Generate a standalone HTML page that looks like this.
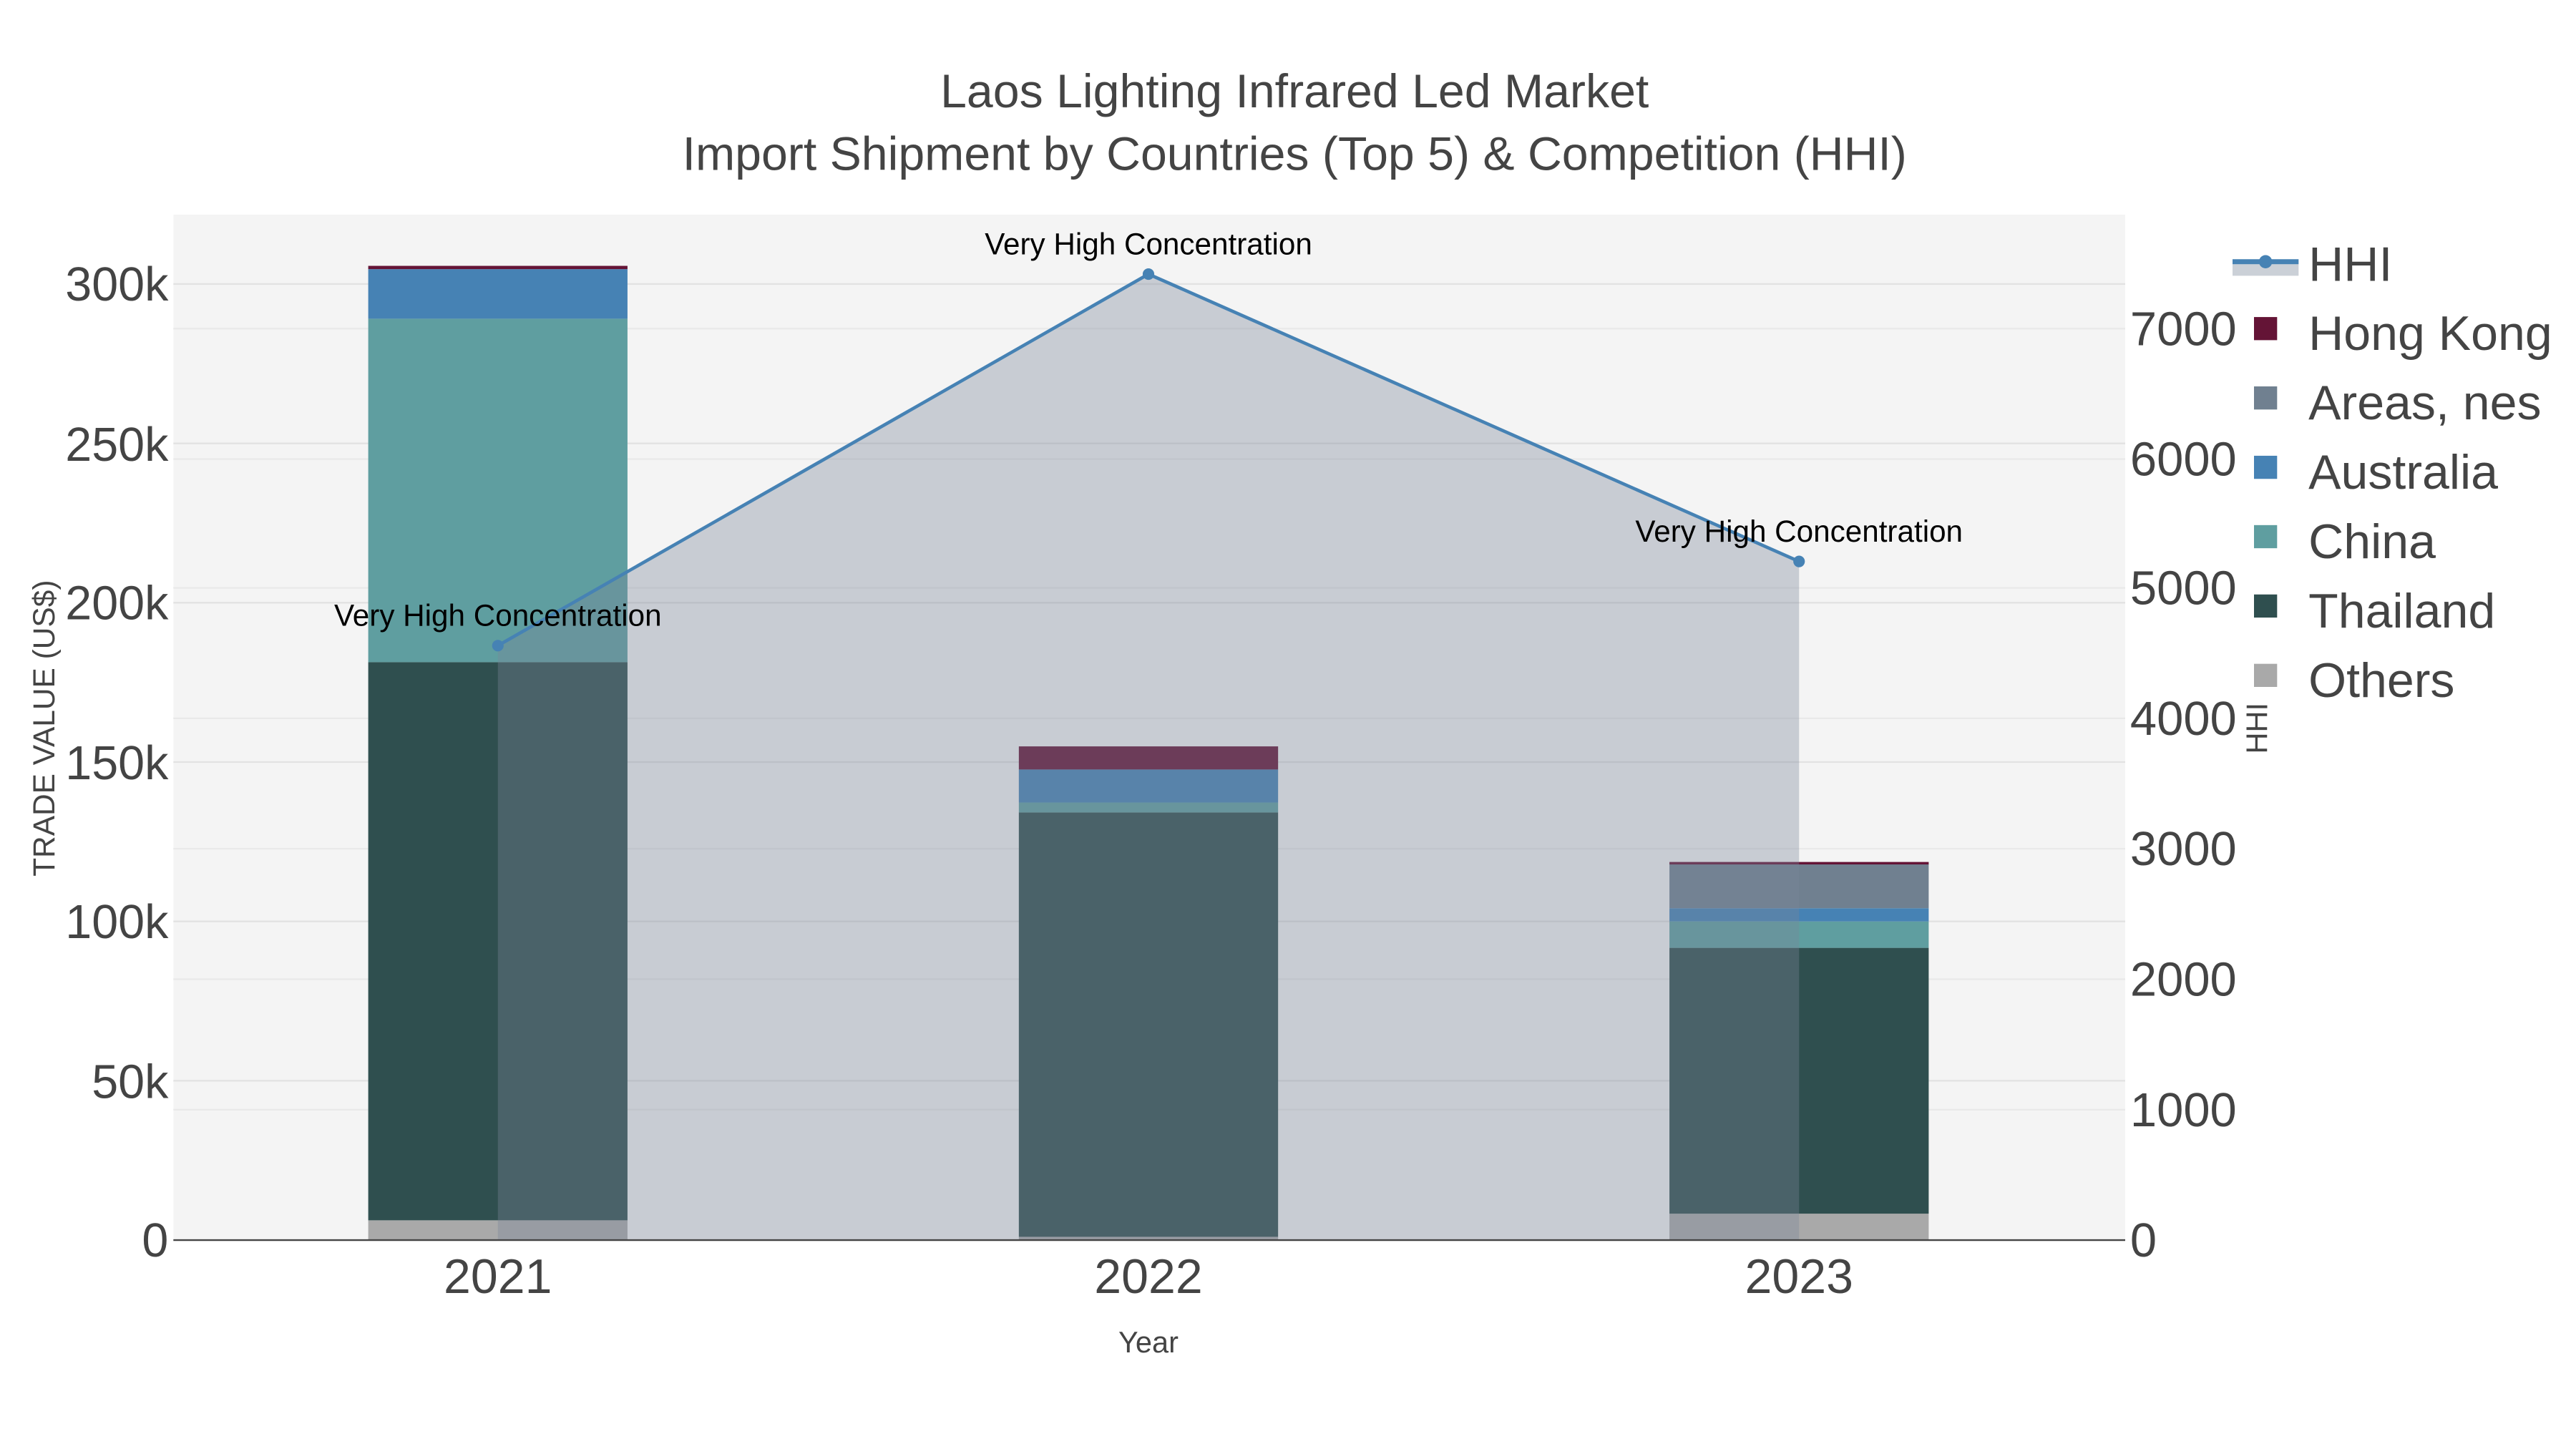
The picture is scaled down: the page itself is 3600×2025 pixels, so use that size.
<!DOCTYPE html>
<html><head><meta charset="utf-8"><style>html,body{margin:0;padding:0;background:#fff}svg{display:block}</style></head>
<body>
<svg width="3600" height="2025" viewBox="0 0 1560 877.5" xmlns="http://www.w3.org/2000/svg" font-family="Liberation Sans, sans-serif">
<rect width="1560" height="877.5" fill="#fff"/>
<rect x="105" y="130" width="1182" height="621" fill="#f4f4f4"/>
<g stroke="#e2e2e2" stroke-width="1">
<line x1="105" x2="1287" y1="654.5" y2="654.5"/><line x1="105" x2="1287" y1="558" y2="558"/><line x1="105" x2="1287" y1="461.5" y2="461.5"/><line x1="105" x2="1287" y1="365" y2="365"/><line x1="105" x2="1287" y1="268.5" y2="268.5"/><line x1="105" x2="1287" y1="172" y2="172"/>
</g>
<g stroke="#e9e9e9" stroke-width="1">
<line x1="105" x2="1287" y1="672" y2="672"/><line x1="105" x2="1287" y1="593" y2="593"/><line x1="105" x2="1287" y1="514" y2="514"/><line x1="105" x2="1287" y1="435" y2="435"/><line x1="105" x2="1287" y1="356" y2="356"/><line x1="105" x2="1287" y1="278" y2="278"/><line x1="105" x2="1287" y1="199" y2="199"/>
</g>
<rect x="223" y="739" width="157" height="12" fill="#a9a9a9"/>
<rect x="223" y="401" width="157" height="338" fill="#2f4f4f"/>
<rect x="223" y="193" width="157" height="208" fill="#5f9ea0"/>
<rect x="223" y="163" width="157" height="30" fill="#4682b4"/>
<rect x="223" y="161" width="157" height="2" fill="#641436"/>
<rect x="617" y="749" width="157" height="2" fill="#a9a9a9"/>
<rect x="617" y="492" width="157" height="257" fill="#2f4f4f"/>
<rect x="617" y="486" width="157" height="6" fill="#5f9ea0"/>
<rect x="617" y="466" width="157" height="20" fill="#4682b4"/>
<rect x="617" y="452" width="157" height="14" fill="#641436"/>
<rect x="1011" y="735" width="157" height="16" fill="#a9a9a9"/>
<rect x="1011" y="574" width="157" height="161" fill="#2f4f4f"/>
<rect x="1011" y="558" width="157" height="16" fill="#5f9ea0"/>
<rect x="1011" y="550" width="157" height="8" fill="#4682b4"/>
<rect x="1011" y="523" width="157" height="27" fill="#708090"/>
<rect x="1011" y="522" width="157" height="1.5" fill="#641436"/>
<polygon points="301.5,751 301.5,391 695.5,166 1089.5,340 1089.5,751" fill="rgb(123,134,152)" fill-opacity="0.36"/>
<line x1="105" x2="1287" y1="751" y2="751" stroke="#444" stroke-width="1"/>
<polyline points="301.5,391 695.5,166 1089.5,340" fill="none" stroke="#4682b4" stroke-width="2"/>
<g fill="#4682b4"><circle cx="301.5" cy="391" r="3.5"/><circle cx="695.5" cy="166" r="3.5"/><circle cx="1089.5" cy="340" r="3.5"/></g>
<g font-size="18.3" fill="#000" text-anchor="middle">
<text x="301.5" y="379">Very High Concentration</text>
<text x="695.5" y="154">Very High Concentration</text>
<text x="1089.5" y="328">Very High Concentration</text>
</g>
<g font-size="28.7" fill="#444" text-anchor="middle">
<text x="784" y="65">Laos Lighting Infrared Led Market</text>
<text x="784" y="103">Import Shipment by Countries (Top 5) &amp; Competition (HHI)</text>
</g>
<g font-size="28.8" fill="#444" text-anchor="end">
<text x="102" y="761">0</text><text x="102" y="665">50k</text><text x="102" y="568">100k</text><text x="102" y="472">150k</text><text x="102" y="375">200k</text><text x="102" y="279">250k</text><text x="102" y="182">300k</text>
</g>
<g font-size="29" fill="#444">
<text x="1290" y="761">0</text><text x="1290" y="682">1000</text><text x="1290" y="603">2000</text><text x="1290" y="524">3000</text><text x="1290" y="445">4000</text><text x="1290" y="366">5000</text><text x="1290" y="288">6000</text><text x="1290" y="209">7000</text>
</g>
<g font-size="29.5" fill="#444" text-anchor="middle">
<text x="301.5" y="783">2021</text><text x="695.5" y="783">2022</text><text x="1089.5" y="783">2023</text>
</g>
<text x="695.5" y="819" font-size="18" fill="#444" text-anchor="middle">Year</text>
<text transform="translate(33,441) rotate(-90)" font-size="18.4" fill="#444" text-anchor="middle">TRADE VALUE (US$)</text>
<text transform="translate(1373,441) rotate(-90)" font-size="18" fill="#444" text-anchor="middle">HHI</text>
<rect x="1352" y="160" width="40" height="7" fill="#cbd0d7"/>
<line x1="1352" x2="1392" y1="158.5" y2="158.5" stroke="#4682b4" stroke-width="3"/>
<circle cx="1372" cy="158.5" r="4" fill="#4682b4"/>
<rect x="1365" y="192" width="14" height="14" fill="#641436"/>
<rect x="1365" y="234" width="14" height="14" fill="#708090"/>
<rect x="1365" y="276" width="14" height="14" fill="#4682b4"/>
<rect x="1365" y="318" width="14" height="14" fill="#5f9ea0"/>
<rect x="1365" y="360" width="14" height="14" fill="#2f4f4f"/>
<rect x="1365" y="402" width="14" height="14" fill="#a9a9a9"/>
<g font-size="29.5" fill="#444">
<text x="1398" y="170">HHI</text><text x="1398" y="212">Hong Kong</text><text x="1398" y="254">Areas, nes</text><text x="1398" y="296">Australia</text><text x="1398" y="338">China</text><text x="1398" y="380">Thailand</text><text x="1398" y="422">Others</text>
</g>
</svg>
</body></html>
